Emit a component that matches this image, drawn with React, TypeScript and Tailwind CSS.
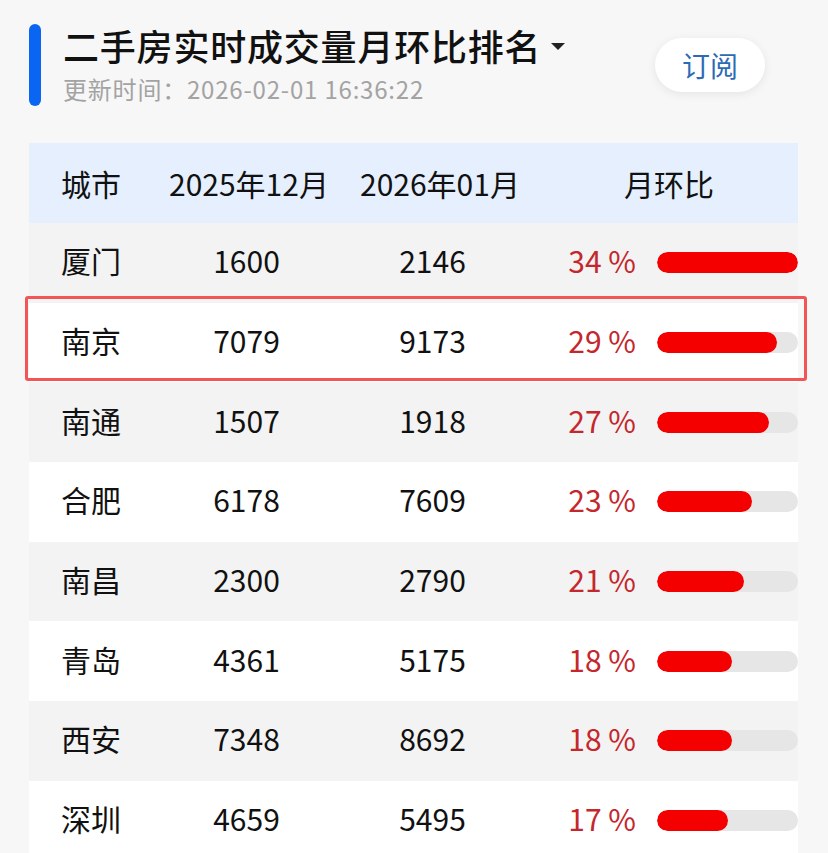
import React from "react";

type Row = { city: string; prev: number; cur: number; pct: number };

const rows: Row[] = [
  { city: "厦门", prev: 1600, cur: 2146, pct: 34 },
  { city: "南京", prev: 7079, cur: 9173, pct: 29 },
  { city: "南通", prev: 1507, cur: 1918, pct: 27 },
  { city: "合肥", prev: 6178, cur: 7609, pct: 23 },
  { city: "南昌", prev: 2300, cur: 2790, pct: 21 },
  { city: "青岛", prev: 4361, cur: 5175, pct: 18 },
  { city: "西安", prev: 7348, cur: 8692, pct: 18 },
  { city: "深圳", prev: 4659, cur: 5495, pct: 17 },
];

const maxPct = 34;

export default function App() {
  return (
    <div
      className="min-h-screen w-full bg-[#f7f7f7] text-[#111] overflow-hidden"
      style={{ fontFamily: '"Noto Sans CJK SC", "Noto Sans", sans-serif' }}
    >
      {/* Header */}
      <div className="flex items-start pt-[24px] pl-[29px]">
        <div className="w-[12px] h-[82px] rounded-full bg-[#0a66f2]" />
        <div className="ml-[22px] flex flex-col">
          <div className="flex items-center">
            <h1 className="text-[36px] leading-[42px] font-medium tracking-[0.8px] text-[#111]">
              二手房实时成交量月环比排名
            </h1>
            <span className="ml-[10px] mt-[2px] w-0 h-0 border-l-[7px] border-r-[7px] border-t-[7px] border-l-transparent border-r-transparent border-t-[#222]" />
          </div>
          <p className="mt-[9px] text-[24px] leading-[28px] tracking-[0.8px] text-[#a3a3a3]">
            更新时间：2026-02-01 16:36:22
          </p>
        </div>
        <button className="ml-auto mr-[63px] mt-[14px] w-[110px] h-[54px] rounded-full bg-white shadow-[0_2px_10px_rgba(0,0,0,0.08)] text-[28px] text-[#2c6ab4] flex items-center justify-center">
          订阅
        </button>
      </div>

      {/* Table */}
      <div className="mt-[37px] ml-[29px] w-[769px]">
        <div className="flex items-center h-[80px] bg-[#e6effd] text-[30px]">
          <div className="w-[140px] pl-[32px]">城市</div>
          <div className="w-[191px]">2025年12月</div>
          <div className="w-[180px]">2026年01月</div>
          <div className="flex-1 text-center">月环比</div>
        </div>

        {rows.map((r, i) => (
          <div
            key={r.city}
            className={`relative flex items-center h-[79.7px] text-[30px] ${
              i % 2 === 0 ? "bg-[#f3f3f3]" : "bg-white"
            }`}
          >
            <div className="w-[150px] pl-[32px] mb-[4px]">{r.city}</div>
            <div className="w-[135px] text-center mb-[4px]">{r.prev}</div>
            <div className="w-[237px] text-center mb-[4px]">{r.cur}</div>
            <div className="w-[85px] text-right text-[#c4272c] mb-[4px]">{r.pct} %</div>
            <div className="ml-[21px] w-[141px] h-[21px] rounded-full bg-[#e6e6e6] overflow-hidden">
              <div
                className="h-full rounded-full bg-[#f50000]"
                style={{ width: `${(r.pct / maxPct) * 141}px` }}
              />
            </div>
            {r.city === "南京" && (
              <div className="absolute left-[-4px] right-[-9px] top-[-7px] bottom-[1px] border-[3px] border-[#f25555] rounded-[3px] pointer-events-none" />
            )}
          </div>
        ))}
      </div>
    </div>
  );
}
